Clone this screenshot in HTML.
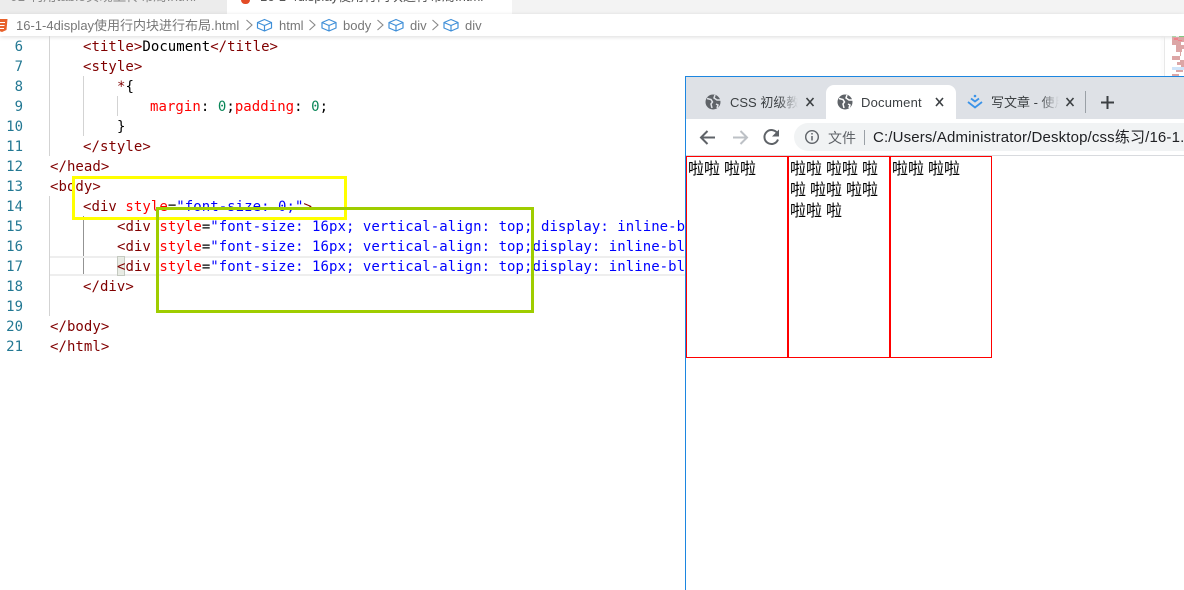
<!DOCTYPE html>
<html lang="zh"><head><meta charset="utf-8"><title>Document</title>
<style>
*{margin:0;padding:0;box-sizing:border-box}
html,body{width:1184px;height:590px;overflow:hidden;background:#fff}
body{position:relative;font-family:"Liberation Sans","Noto Sans CJK SC",sans-serif}
.a{position:absolute;white-space:nowrap}
.ln{position:absolute;left:-1px;width:24px;text-align:right;font:14px/20px "DejaVu Sans Mono",monospace;color:#237893}
.c{position:absolute;white-space:pre;font:14px/20px "DejaVu Sans Mono","Noto Sans CJK SC",monospace;color:#000;letter-spacing:.05px}
.t{color:#800000}.r{color:#f00}.b{color:#00f}.g{color:#098658}
.crumb{color:#777;font-size:13px;line-height:20px}
.tabt{font-size:13px;line-height:18px;color:#3c4043}
.box{position:absolute;top:156px;width:102px;height:202px;border:1px solid #f00;font:16px/21px "Liberation Serif","Noto Sans CJK SC",sans-serif;color:#000;padding-top:2px;padding-left:1px;white-space:normal;word-break:normal}
</style></head><body>
<!-- editor tabs -->
<div class="a" style="left:0;top:0;width:1184px;height:14px;background:#f3f3f3"></div>
<div class="a" style="left:0;top:0;width:227px;height:14px;background:#ececec"></div>
<div class="a" style="left:227px;top:0;width:285px;height:14px;background:#fff"></div>
<div class="a" style="left:10px;top:-13px;font-size:13.500px;line-height:20px;color:#8a8a8a">01-利用table实现上传布局.html</div>
<div class="a" style="left:241px;top:-4px;width:9px;height:8px;background:#e34c26;border-radius:0 0 4px 4px"></div>
<div class="a" style="left:260px;top:-13px;font-size:13px;line-height:20px;color:#555">16-1-4display使用行内块进行布局.html</div>
<div class="a" style="left:490px;top:-13px;font-size:13px;line-height:20px;color:#555">× </div>
<!-- breadcrumb -->
<div class="a" style="left:0;top:14px;width:1184px;height:22px;background:#fff;box-shadow:0 1px 4px rgba(0,0,0,.14)"></div>
<svg class="a" style="left:0;top:18px" width="8" height="16"><path d="M-3 1H7.500L6.500 12 2 14-3 12z" fill="#e8622c"/><path d="M0 4.500H5M0 7.500H4.500M0 10.500H4" stroke="#fff" stroke-width="1"/></svg>
<div class="a crumb" style="left:16px;top:16px">16-1-4display使用行内块进行布局.html</div>
<svg class="a" style="left:236px;top:14px" width="250" height="22" fill="none">
<g stroke="#888" stroke-width="1.100"><path d="M10.500 6l5.500 5-5.500 5"/><path d="M73.500 6l5.500 5-5.500 5"/><path d="M141.500 6l5.500 5-5.500 5"/><path d="M196.500 6l5.500 5-5.500 5"/></g>
<g stroke="#3f8fd8" stroke-width="1.200" stroke-linejoin="round">
<path d="M21.500 8.500l7-3 7 3V14l-7 3-7-3zM21.500 8.500l7 3 7-3M28.500 11.500V17"/>
<path d="M86 8.500l7-3 7 3V14l-7 3-7-3zM86 8.500l7 3 7-3M93 11.500V17"/>
<path d="M153 8.500l7-3 7 3V14l-7 3-7-3zM153 8.500l7 3 7-3M160 11.500V17"/>
<path d="M208 8.500l7-3 7 3V14l-7 3-7-3zM208 8.500l7 3 7-3M215 11.500V17"/></g>
</svg>
<div class="a crumb" style="left:279px;top:16px">html</div>
<div class="a crumb" style="left:343px;top:16px">body</div>
<div class="a crumb" style="left:410px;top:16px">div</div>
<div class="a crumb" style="left:465px;top:16px">div</div>
<!-- line numbers -->
<div class="ln" style="top:37px">6</div><div class="ln" style="top:57px">7</div><div class="ln" style="top:77px">8</div><div class="ln" style="top:97px">9</div><div class="ln" style="top:117px">10</div><div class="ln" style="top:137px">11</div><div class="ln" style="top:157px">12</div><div class="ln" style="top:177px">13</div><div class="ln" style="top:197px">14</div><div class="ln" style="top:217px">15</div><div class="ln" style="top:237px">16</div><div class="ln" style="top:257px">17</div><div class="ln" style="top:277px">18</div><div class="ln" style="top:297px">19</div><div class="ln" style="top:317px">20</div><div class="ln" style="top:337px">21</div>
<!-- indent guides / current line -->
<div class="a" style="left:49px;top:36px;width:1px;height:120px;background:#d3d3d3"></div>
<div class="a" style="left:83px;top:76px;width:1px;height:60px;background:#d3d3d3"></div>
<div class="a" style="left:117px;top:96px;width:1px;height:20px;background:#d3d3d3"></div>
<div class="a" style="left:49px;top:196px;width:1px;height:120px;background:#d3d3d3"></div>
<div class="a" style="left:83px;top:216px;width:1px;height:60px;background:#939393"></div>
<div class="a" style="left:50px;top:256px;width:636px;height:20px;border-top:2px solid #eee;border-bottom:2px solid #eee"></div>
<div class="a" style="left:117px;top:256px;width:8px;height:20px;background:#e8ebe4;border:1px solid #c4c9c0"></div>
<!-- code -->
<div class="c" style="left:83px;top:37px"><span class="t">&lt;title&gt;</span>Document<span class="t">&lt;/title&gt;</span></div>
<div class="c" style="left:83px;top:57px"><span class="t">&lt;style&gt;</span></div>
<div class="c" style="left:117px;top:77px"><span class="t">*</span>{</div>
<div class="c" style="left:150px;top:97px"><span class="r">margin</span>: <span class="g">0</span>;<span class="r">padding</span>: <span class="g">0</span>;</div>
<div class="c" style="left:117px;top:117px">}</div>
<div class="c" style="left:83px;top:137px"><span class="t">&lt;/style&gt;</span></div>
<div class="c" style="left:50px;top:157px"><span class="t">&lt;/head&gt;</span></div>
<div class="c" style="left:50px;top:177px"><span class="t">&lt;body&gt;</span></div>
<div class="c" style="left:83px;top:197px"><span class="t">&lt;div</span> <span class="r">style</span>=<span class="b">"font-size: 0;"</span><span class="t">&gt;</span></div>
<div class="a" style="left:0;top:217px;width:686px;height:60px;overflow:hidden">
<div class="c" style="left:117px;top:0"><span class="t">&lt;div</span> <span class="r">style</span>=<span class="b">"font-size: 16px; vertical-align: top; display: inline-block;</span></div>
<div class="c" style="left:117px;top:20px"><span class="t">&lt;div</span> <span class="r">style</span>=<span class="b">"font-size: 16px; vertical-align: top;display: inline-block;</span></div>
<div class="c" style="left:117px;top:40px"><span class="t">&lt;div</span> <span class="r">style</span>=<span class="b">"font-size: 16px; vertical-align: top;display: inline-block;</span></div>
</div>
<div class="c" style="left:83px;top:277px"><span class="t">&lt;/div&gt;</span></div>
<div class="c" style="left:50px;top:317px"><span class="t">&lt;/body&gt;</span></div>
<div class="c" style="left:50px;top:337px"><span class="t">&lt;/html&gt;</span></div>
<!-- minimap -->
<div class="a" style="left:1164px;top:36px;width:1px;height:40px;background:#e8e8e8;box-shadow:-2px 0 3px rgba(0,0,0,.06)"></div>
<svg class="a" style="left:1172px;top:36px" width="12" height="40"><g fill="#dca6a6"><rect x="0" y="0" width="4" height="1" fill="#a8d8a8"/><rect x="7" y="0" width="5" height="1" fill="#80c880"/><rect x="0" y="1" width="12" height="5"/><rect x="0" y="6" width="9" height="3"/><rect x="4" y="9" width="8" height="4"/><rect x="4" y="13" width="6" height="3"/><rect x="8" y="16" width="1" height="4"/><rect x="0" y="20" width="8" height="4"/><rect x="8" y="24" width="4" height="2"/><rect x="5" y="26" width="7" height="3"/><rect x="9" y="29" width="3" height="2"/><rect x="4" y="34" width="7" height="2"/><rect x="0" y="38" width="7" height="2"/></g><rect x="2" y="2" width="4" height="2" fill="#f0808a"/><rect x="6" y="4" width="4" height="1" fill="#f0808a"/><rect x="0" y="31" width="12" height="3" fill="#cfe4fa"/></svg>
<!-- annotation boxes -->
<div class="a" style="left:72px;top:176px;width:275px;height:44px;border:3px solid #ffff00"></div>
<div class="a" style="left:156px;top:207px;width:378px;height:106px;border:3px solid #9fcd00"></div>
<!-- browser window -->
<div class="a" style="left:685px;top:76px;width:499px;height:514px;background:#fff;border-left:1px solid #1c86e0;border-top:1px solid #1c86e0"></div>
<div class="a" style="left:686px;top:77px;width:498px;height:42px;background:#dee1e6"></div>
<div class="a" style="left:826px;top:85px;width:130px;height:34px;background:#fff;border-radius:8px 8px 0 0"></div>
<div class="a" style="left:686px;top:119px;width:498px;height:37px;background:#fff;border-bottom:1px solid #d8dade"></div>
<div class="a" style="left:794px;top:123px;width:390px;height:28px;background:#f1f3f4;border-radius:14px 0 0 14px"></div>
<svg class="a" style="left:686px;top:77px" width="498" height="79" fill="none">
<circle cx="27" cy="25" r="7.500" fill="#5f6368"/><path d="M21 21.500l4 1 1.500 2.500-1.500 2 1 4M29 18l-1 3 3 2 3.500 0M30 27l2 1-1 3" stroke="#dee1e6" stroke-width="1.500"/>
<circle cx="159" cy="25" r="7.500" fill="#5f6368"/><path d="M153 21.500l4 1 1.500 2.500-1.500 2 1 4M161 18l-1 3 3 2 3.500 0M162 27l2 1-1 3" stroke="#fff" stroke-width="1.500"/>
<path d="M120.500 21l7 8M127.500 21l-7 8" stroke="#3c4043" stroke-width="1.600"/>
<path d="M250 21l7 8M257 21l-7 8" stroke="#3c4043" stroke-width="1.600"/>
<path d="M380.500 21l7 8M387.500 21l-7 8" stroke="#3c4043" stroke-width="1.600"/>
<path d="M285 21.500l4 3 4-3M282 25l7 5.500 7-5.500" stroke="#3b93e8" stroke-width="1.800"/><circle cx="289" cy="19" r="1.300" fill="#3b93e8"/>
<rect x="399" y="14" width="1" height="22" fill="#9aa0a6"/>
<path d="M421.500 19v13M415 25.500h13" stroke="#3c4043" stroke-width="2"/>
<path d="M29 60.500H16M21.500 54l-6.500 6.500 6.500 6.500" stroke="#5f6368" stroke-width="2"/>
<path d="M47 60.500H60M54.500 54l6.500 6.500-6.500 6.500" stroke="#bdc1c6" stroke-width="2"/>
<path d="M91.500 56.500a7 7 0 1 0 .5 6" stroke="#5f6368" stroke-width="2"/><path d="M93 52.500v7h-7z" fill="#5f6368"/>
<circle cx="126" cy="60" r="6.300" stroke="#5f6368" stroke-width="1.400"/><path d="M126 59v4.500M126 56v1.500" stroke="#5f6368" stroke-width="1.500"/>
<rect x="178" y="53" width="1" height="15" fill="#9aa0a6"/>
</svg>
<div class="a tabt" style="left:730px;top:94px;width:68px;overflow:hidden">CSS 初级教程</div>
<div class="a" style="left:778px;top:94px;width:20px;height:18px;background:linear-gradient(90deg,rgba(222,225,230,0),#dee1e6)"></div>
<div class="a tabt" style="left:861px;top:94px;letter-spacing:.2px">Document</div>
<div class="a tabt" style="left:991px;top:94px;width:68px;overflow:hidden">写文章 - 使用</div>
<div class="a" style="left:1040px;top:94px;width:19px;height:18px;background:linear-gradient(90deg,rgba(222,225,230,0),#dee1e6)"></div>
<div class="a" style="left:828px;top:129px;font-size:14px;line-height:18px;color:#5f6368">文件</div>
<div class="a" style="left:873px;top:129px;width:311px;overflow:hidden;font-size:15px;line-height:18px;letter-spacing:.15px;color:#202124">C:/Users/Administrator/Desktop/css练习/16-1.</div>
<!-- page boxes -->
<div class="box" style="left:686px">啦啦 啦啦</div>
<div class="box" style="left:788px">啦啦 啦啦 啦啦 啦啦 啦啦 啦啦 啦</div>
<div class="box" style="left:890px">啦啦 啦啦</div>
</body></html>
